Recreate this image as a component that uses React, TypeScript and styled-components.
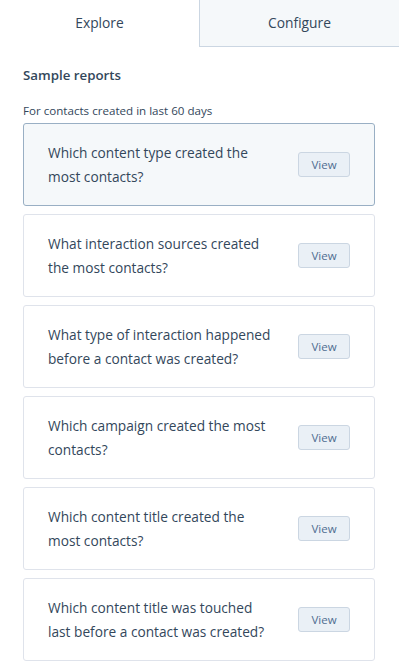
import React from 'react';
import styled, { createGlobalStyle } from 'styled-components';

const FONT = '"Open Sans", "Noto Sans", sans-serif';
const TEXT = '#33475b';

const GlobalStyle = createGlobalStyle`
  body {
    margin: 0;
    background: #ffffff;
    font-family: ${FONT};
    color: ${TEXT};
  }
`;

const Page = styled.div`
  width: 399px;
  min-height: 668px;
  background: #ffffff;
`;

const Tabs = styled.div`
  display: grid;
  grid-template-columns: 199px 1fr;
  height: 47px;
`;

const Tab = styled.div<{ $active?: boolean }>`
  display: flex;
  align-items: center;
  justify-content: center;
  font-size: 13.8px;
  background: ${(p) => (p.$active ? '#ffffff' : '#f5f8fa')};
  border-left: ${(p) => (p.$active ? 'none' : '1px solid #cbd6e2')};
  border-bottom: ${(p) => (p.$active ? 'none' : '1px solid #cbd6e2')};
  padding-bottom: 2px;
  box-sizing: border-box;
`;

const Body = styled.div`
  padding: 19px 24px 0 23px;
`;

const Heading = styled.h2`
  margin: 0;
  font-size: 13.3px;
  font-weight: 600;
  line-height: 18px;
`;

const Caption = styled.div`
  margin-top: 20px;
  font-size: 11.6px;
  line-height: 14px;
`;

const CardList = styled.div`
  display: flex;
  flex-direction: column;
  gap: 8px;
  margin-top: 5px;
`;

const Card = styled.div<{ $selected?: boolean }>`
  display: flex;
  align-items: center;
  justify-content: space-between;
  height: 83px;
  box-sizing: border-box;
  padding: 0 24px;
  border: 1px solid ${(p) => (p.$selected ? '#99afc4' : '#dfe3eb')};
  border-radius: 3px;
  background: ${(p) => (p.$selected ? '#f5f8fa' : '#ffffff')};
`;

const Question = styled.div`
  width: 228px;
  font-size: 13.7px;
  line-height: 24px;
`;

const ViewButton = styled.button`
  width: 52px;
  height: 25px;
  border: 1px solid #cbd6e2;
  border-radius: 3px;
  background: #eaf0f6;
  color: #506e91;
  font-family: ${FONT};
  font-size: 11.5px;
  padding: 0;
  flex-shrink: 0;
`;

const reports = [
  'Which content type created the most contacts?',
  'What interaction sources created the most contacts?',
  'What type of interaction happened before a contact was created?',
  'Which campaign created the most contacts?',
  'Which content title created the most contacts?',
  'Which content title was touched last before a contact was created?',
];

export default function App() {
  return (
    <Page>
      <GlobalStyle />
      <Tabs>
        <Tab $active>Explore</Tab>
        <Tab>Configure</Tab>
      </Tabs>
      <Body>
        <Heading>Sample reports</Heading>
        <Caption>For contacts created in last 60 days</Caption>
        <CardList>
          {reports.map((r, i) => (
            <Card key={r} $selected={i === 0}>
              <Question>{r}</Question>
              <ViewButton>View</ViewButton>
            </Card>
          ))}
        </CardList>
      </Body>
    </Page>
  );
}
